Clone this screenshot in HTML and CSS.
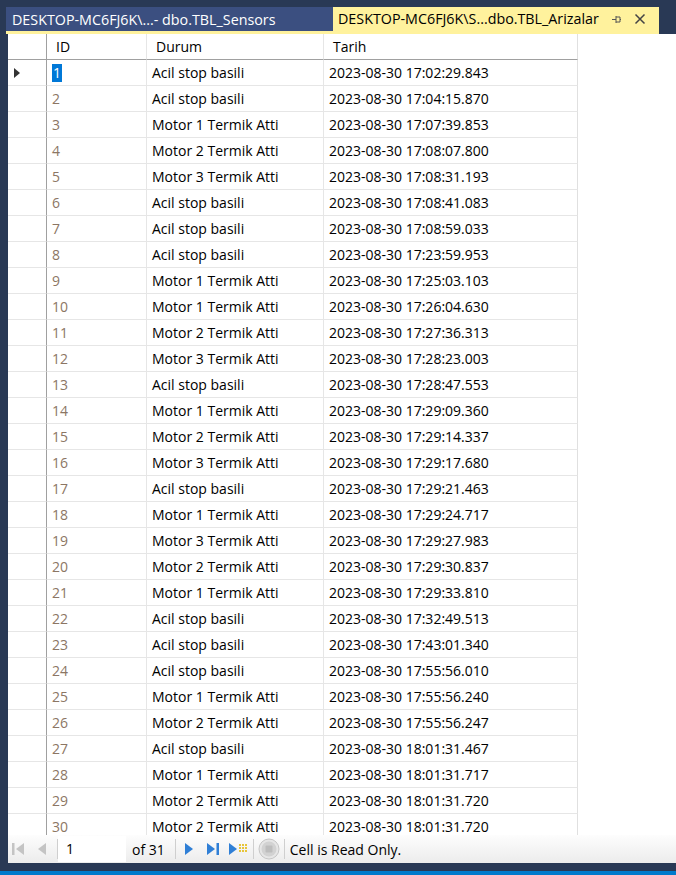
FILE: index.html
```html
<!DOCTYPE html>
<html>
<head>
<meta charset="utf-8">
<link rel="stylesheet" href="styles.css">
</head>
<body>
<div class="tabs">
  <div class="tab inactive">DESKTOP-MC6FJ6K\...- dbo.TBL_Sensors</div>
  <div class="tab active">
    <span class="tabtext">DESKTOP-MC6FJ6K\S...dbo.TBL_Arizalar</span>
    <svg class="pin" width="10" height="10" viewBox="0 0 10 10"><path d="M0 5.5h4M4 2v7M4 3h4v5H4M8 5.5h1" fill="none" stroke="#555" stroke-width="1"/></svg>
    <svg class="close" width="12" height="12" viewBox="0 0 12 12"><path d="M1.5 1.5l9 9M10.5 1.5l-9 9" stroke="#444" stroke-width="1.5"/></svg>
  </div>
</div>
<div class="tabline"></div>
<div class="doc">
  <div class="grid">
    <div class="rh hd"></div><div class="c hd">ID</div><div class="c hd">Durum</div><div class="c hd">Tarih</div>
    <div class="rh"><span class="arrow"></span></div><div class="c id"><span class="sel">1</span></div><div class="c">Acil stop basili</div><div class="c">2023-08-30 17:02:29.843</div>
    <div class="rh"></div><div class="c id">2</div><div class="c">Acil stop basili</div><div class="c">2023-08-30 17:04:15.870</div>
    <div class="rh"></div><div class="c id">3</div><div class="c">Motor 1 Termik Atti</div><div class="c">2023-08-30 17:07:39.853</div>
    <div class="rh"></div><div class="c id">4</div><div class="c">Motor 2 Termik Atti</div><div class="c">2023-08-30 17:08:07.800</div>
    <div class="rh"></div><div class="c id">5</div><div class="c">Motor 3 Termik Atti</div><div class="c">2023-08-30 17:08:31.193</div>
    <div class="rh"></div><div class="c id">6</div><div class="c">Acil stop basili</div><div class="c">2023-08-30 17:08:41.083</div>
    <div class="rh"></div><div class="c id">7</div><div class="c">Acil stop basili</div><div class="c">2023-08-30 17:08:59.033</div>
    <div class="rh"></div><div class="c id">8</div><div class="c">Acil stop basili</div><div class="c">2023-08-30 17:23:59.953</div>
    <div class="rh"></div><div class="c id">9</div><div class="c">Motor 1 Termik Atti</div><div class="c">2023-08-30 17:25:03.103</div>
    <div class="rh"></div><div class="c id">10</div><div class="c">Motor 1 Termik Atti</div><div class="c">2023-08-30 17:26:04.630</div>
    <div class="rh"></div><div class="c id">11</div><div class="c">Motor 2 Termik Atti</div><div class="c">2023-08-30 17:27:36.313</div>
    <div class="rh"></div><div class="c id">12</div><div class="c">Motor 3 Termik Atti</div><div class="c">2023-08-30 17:28:23.003</div>
    <div class="rh"></div><div class="c id">13</div><div class="c">Acil stop basili</div><div class="c">2023-08-30 17:28:47.553</div>
    <div class="rh"></div><div class="c id">14</div><div class="c">Motor 1 Termik Atti</div><div class="c">2023-08-30 17:29:09.360</div>
    <div class="rh"></div><div class="c id">15</div><div class="c">Motor 2 Termik Atti</div><div class="c">2023-08-30 17:29:14.337</div>
    <div class="rh"></div><div class="c id">16</div><div class="c">Motor 3 Termik Atti</div><div class="c">2023-08-30 17:29:17.680</div>
    <div class="rh"></div><div class="c id">17</div><div class="c">Acil stop basili</div><div class="c">2023-08-30 17:29:21.463</div>
    <div class="rh"></div><div class="c id">18</div><div class="c">Motor 1 Termik Atti</div><div class="c">2023-08-30 17:29:24.717</div>
    <div class="rh"></div><div class="c id">19</div><div class="c">Motor 3 Termik Atti</div><div class="c">2023-08-30 17:29:27.983</div>
    <div class="rh"></div><div class="c id">20</div><div class="c">Motor 2 Termik Atti</div><div class="c">2023-08-30 17:29:30.837</div>
    <div class="rh"></div><div class="c id">21</div><div class="c">Motor 1 Termik Atti</div><div class="c">2023-08-30 17:29:33.810</div>
    <div class="rh"></div><div class="c id">22</div><div class="c">Acil stop basili</div><div class="c">2023-08-30 17:32:49.513</div>
    <div class="rh"></div><div class="c id">23</div><div class="c">Acil stop basili</div><div class="c">2023-08-30 17:43:01.340</div>
    <div class="rh"></div><div class="c id">24</div><div class="c">Acil stop basili</div><div class="c">2023-08-30 17:55:56.010</div>
    <div class="rh"></div><div class="c id">25</div><div class="c">Motor 1 Termik Atti</div><div class="c">2023-08-30 17:55:56.240</div>
    <div class="rh"></div><div class="c id">26</div><div class="c">Motor 2 Termik Atti</div><div class="c">2023-08-30 17:55:56.247</div>
    <div class="rh"></div><div class="c id">27</div><div class="c">Acil stop basili</div><div class="c">2023-08-30 18:01:31.467</div>
    <div class="rh"></div><div class="c id">28</div><div class="c">Motor 1 Termik Atti</div><div class="c">2023-08-30 18:01:31.717</div>
    <div class="rh"></div><div class="c id">29</div><div class="c">Motor 2 Termik Atti</div><div class="c">2023-08-30 18:01:31.720</div>
    <div class="rh"></div><div class="c id">30</div><div class="c">Motor 2 Termik Atti</div><div class="c">2023-08-30 18:01:31.720</div>
  </div>
</div>
<div class="nav">
  <svg class="ic first" width="14" height="16" viewBox="0 0 14 16"><rect x="1" y="2" width="2.5" height="12" fill="#c4c4c4"/><path d="M13 2v12L5 8z" fill="#c4c4c4"/></svg>
  <svg class="ic prev" width="10" height="16" viewBox="0 0 10 16"><path d="M9 2v12L1 8z" fill="#c4c4c4"/></svg>
  <span class="sep"></span>
  <span class="box">1</span>
  <span class="of">of 31</span>
  <span class="sep"></span>
  <svg class="ic next" width="10" height="16" viewBox="0 0 10 16"><path d="M1 2v12l8-6z" fill="#2f7fd6"/></svg>
  <svg class="ic last" width="14" height="16" viewBox="0 0 14 16"><path d="M1 2v12l8-6z" fill="#2f7fd6"/><rect x="10.5" y="2" width="2.5" height="12" fill="#2f7fd6"/></svg>
  <svg class="ic new" width="20" height="16" viewBox="0 0 20 16"><path d="M1 2v12l8-6z" fill="#2f7fd6"/><g fill="#e8c53a"><rect x="11" y="3" width="2" height="2"/><rect x="14" y="3" width="2" height="2"/><rect x="17" y="3" width="2" height="2"/><rect x="11" y="6" width="2" height="2"/><rect x="17" y="6" width="2" height="2"/><rect x="11" y="9" width="2" height="2"/><rect x="14" y="9" width="2" height="2"/><rect x="17" y="9" width="2" height="2"/><rect x="14" y="6" width="2" height="2"/></g></svg>
  <span class="sep sep3"></span>
  <svg class="ic stop" width="22" height="22" viewBox="0 0 22 22"><circle cx="11" cy="11" r="10" fill="#e6e6e6" stroke="#c6c6c6" stroke-width="1"/><circle cx="11" cy="11" r="7.5" fill="#d2d2d2"/><rect x="7.5" y="7.5" width="7" height="7" rx="1" fill="#bdbdbd"/></svg>
  <span class="sep sep4"></span>
  <span class="msg">Cell is Read Only.</span>
</div>
<div class="gap"></div>
<div class="status"></div>
</body>
</html>
```
FILE: styles.css
```css
html, body {
  margin: 0;
  padding: 0;
}
body {
  width: 676px;
  height: 875px;
  overflow: hidden;
  background: #293955;
  font-family: "Open Sans", "Noto Sans", sans-serif;
  font-size: 14px;
  color: #000;
}
.tabs {
  display: flex;
  padding: 7px 0 0 6px;
  height: 24px;
}
.tab {
  height: 24px;
  line-height: 26px;
  box-sizing: border-box;
  padding-left: 6px;
  white-space: nowrap;
  font-size: 14.3px;
}
.inactive {
  width: 327px;
  background: #3b4f80;
  color: #fff;
}
.active {
  width: 326px;
  background: #fff29d;
  color: #000;
  display: flex;
  align-items: center;
  padding-left: 5px;
}
.tabtext {
  flex: 0 0 auto;
}
.pin {
  margin-left: 13px;
}
.close {
  margin-left: 12px;
}
.tabline {
  margin-left: 6px;
  width: 653px;
  height: 3px;
  background: #fff29d;
}
.doc {
  margin-left: 8px;
  height: 801px;
  background: #fff;
  overflow: hidden;
}
.grid {
  display: grid;
  grid-template-columns: 39px 100px 177px 254px;
  grid-auto-rows: 26px;
}
.grid > div {
  box-sizing: border-box;
  border-bottom: 1px solid #e6e6e6;
  border-right: 1px solid #e6e6e6;
}
.grid > .rh {
  border-right: 1px solid #a0a0a0;
  position: relative;
}
.grid > .hd {
  border-bottom: 1px solid #a0a0a0;
}
.grid > div:nth-child(4n) {
  border-right: 1px solid #e0e0e0;
}
.c {
  padding-left: 5px;
  line-height: 26px;
  white-space: nowrap;
  overflow: hidden;
}
.hd.c {
  padding-left: 9px;
  line-height: 26px;
}
.id {
  color: #8c7664;
}
.sel {
  display: inline-block;
  background: #0078d7;
  color: #fff;
  line-height: 18px;
  padding: 0 1px;
}
.arrow {
  position: absolute;
  left: 6px;
  top: 8px;
  width: 0;
  height: 0;
  border-top: 5px solid transparent;
  border-bottom: 5px solid transparent;
  border-left: 6px solid #333;
}
.nav {
  margin-left: 8px;
  height: 28px;
  background: linear-gradient(#fdfdfd, #ececec);
  display: flex;
  align-items: center;
  font-size: 14px;
}
.ic {
  flex: 0 0 auto;
}
.first { margin-left: 3px; }
.prev { margin-left: 12px; }
.sep {
  width: 1px;
  height: 20px;
  background: #cfcfcf;
  margin: 0 0 0 10px;
}
.box {
  width: 68px;
  height: 26px;
  background: #fff;
  box-sizing: border-box;
  padding-left: 8px;
  line-height: 26px;
}
.of { margin-left: 6px; }
.next { margin-left: 8px; }
.last { margin-left: 12px; }
.new { margin-left: 8px; }
.sep3 { margin-left: 5px; }
.stop { margin-left: 4px; }
.sep4 { margin-left: 4px; }
.msg { margin-left: 5px; }
.gap {
  height: 8px;
}
.status {
  height: 4px;
  background: #007acc;
}
```
